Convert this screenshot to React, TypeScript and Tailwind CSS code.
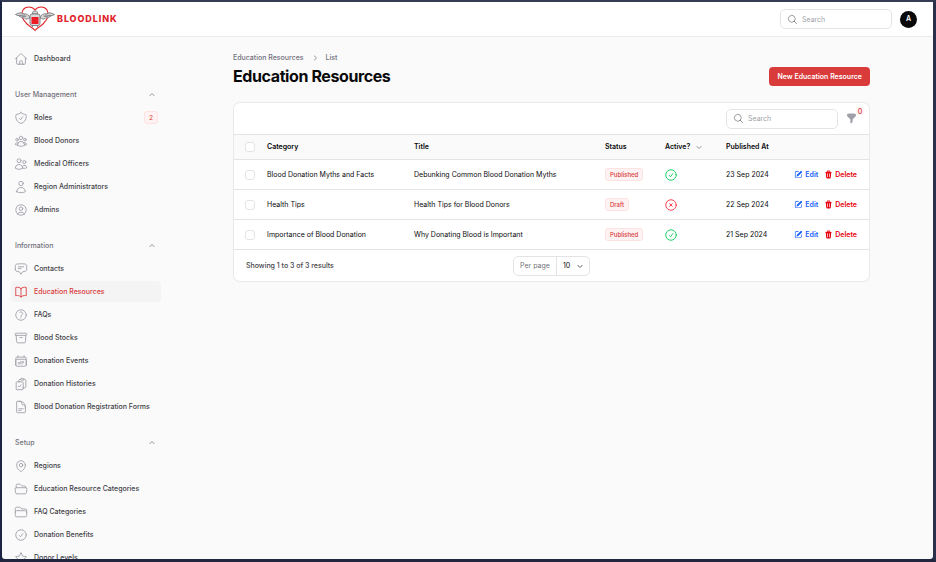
import type { ReactNode } from "react";
import type { IconType } from "react-icons";
import {
  HiOutlineHome, HiOutlineShieldCheck, HiOutlineUserGroup, HiOutlineUsers, HiOutlineUser, HiOutlineUserCircle,
  HiOutlineChatBubbleBottomCenterText, HiOutlineBookOpen, HiOutlineQuestionMarkCircle, HiOutlineArchiveBox,
  HiOutlineCalendarDays, HiOutlineClipboardDocumentCheck, HiOutlineDocumentText, HiOutlineMapPin,
  HiOutlineFolderOpen, HiOutlineFolder, HiOutlineCheckCircle, HiOutlineXCircle, HiOutlineStar,
  HiOutlineMagnifyingGlass, HiMiniChevronUp, HiMiniChevronDown, HiMiniChevronRight,
  HiMiniFunnel, HiMiniPencilSquare, HiMiniTrash,
} from "react-icons/hi2";

type Item = { label: string; icon: IconType; badge?: string; active?: boolean };

const groups: { label: string; items: Item[] }[] = [
  {
    label: "User Management",
    items: [
      { label: "Roles", icon: HiOutlineShieldCheck, badge: "2" },
      { label: "Blood Donors", icon: HiOutlineUserGroup },
      { label: "Medical Officers", icon: HiOutlineUsers },
      { label: "Region Administrators", icon: HiOutlineUser },
      { label: "Admins", icon: HiOutlineUserCircle },
    ],
  },
  {
    label: "Information",
    items: [
      { label: "Contacts", icon: HiOutlineChatBubbleBottomCenterText },
      { label: "Education Resources", icon: HiOutlineBookOpen, active: true },
      { label: "FAQs", icon: HiOutlineQuestionMarkCircle },
      { label: "Blood Stocks", icon: HiOutlineArchiveBox },
      { label: "Donation Events", icon: HiOutlineCalendarDays },
      { label: "Donation Histories", icon: HiOutlineClipboardDocumentCheck },
      { label: "Blood Donation Registration Forms", icon: HiOutlineDocumentText },
    ],
  },
  {
    label: "Setup",
    items: [
      { label: "Regions", icon: HiOutlineMapPin },
      { label: "Education Resource Categories", icon: HiOutlineFolderOpen },
      { label: "FAQ Categories", icon: HiOutlineFolder },
      { label: "Donation Benefits", icon: HiOutlineCheckCircle },
      { label: "Donor Levels", icon: HiOutlineStar },
    ],
  },
];

const rows = [
  { category: "Blood Donation Myths and Facts", title: "Debunking Common Blood Donation Myths", status: "Published", active: true, date: "23 Sep 2024" },
  { category: "Health Tips", title: "Health Tips for Blood Donors", status: "Draft", active: false, date: "22 Sep 2024" },
  { category: "Importance of Blood Donation", title: "Why Donating Blood is Important", status: "Published", active: true, date: "21 Sep 2024" },
];

function Logo() {
  return (
    <svg viewBox="0 0 40 26" className="h-[26px] w-10" fill="none" aria-hidden="true">
      <path d="M20 4C17 0 10.500 0 8 4C5 9 8 14 12 18C15 21 18 22 20 24.500C22 22 25 21 28 18C32 14 35 9 32 4C29.500 0 23 0 20 4Z" stroke="#e02a2e" strokeWidth="1.100" />
      <g stroke="#77777a" strokeWidth="0.900" fill="#d9d9da">
        <path d="M15 12C13 6.500 10 8.500 8 7.500C5 6 3 7.500 .5 8.500C2 9.500 3 9.500 4 9.500C4 11 6 11 6.500 11C7 12.500 9 12 9.500 12C11 14 13 12.500 15 12Z" />
        <path d="M25 12C27 6.500 30 8.500 32 7.500C35 6 37 7.500 39.500 8.500C38 9.500 37 9.500 36 9.500C36 11 34 11 33.500 11C33 12.500 31 12 30.500 12C29 14 27 12.500 25 12Z" />
        <path d="M4 9.500L10 9M6.500 11L11.500 10M36 9.500L30 9M33.500 11L28.500 10" />
        <path d="M17.500 6.500C17.500 4.500 22.500 4.500 22.500 6.500V8H17.500Z" />
        <rect x="15" y="8" width="10" height="11.500" rx="2" />
        <path d="M17.500 19.500V21M22.500 19.500V21" />
      </g>
      <path d="M16.500 11H23.500V18H16.500Z" fill="#ee1c24" />
    </svg>
  );
}

function SearchBox({ id }: { id: string }) {
  return (
    <label htmlFor={id} className="flex h-5 w-28 items-center gap-1 rounded-[5px] border border-zinc-200 bg-white pl-1.5">
      <HiOutlineMagnifyingGlass className="size-[11px] shrink-0 text-zinc-500" />
      <input id={id} type="text" aria-label="Search" placeholder="Search" className="h-full w-full min-w-0 bg-transparent text-[7px] outline-none placeholder:text-zinc-400" />
    </label>
  );
}

function NavLink({ item }: { item: Item }) {
  const Icon = item.icon;
  return (
    <a
      href="#"
      className={
        item.active
          ? "flex h-[21px] shrink-0 items-center gap-1.5 rounded-[4px] bg-zinc-100 px-[3px] text-[#d93b3b]"
          : "flex h-[21px] shrink-0 items-center gap-1.5 rounded-[4px] px-[3px] text-zinc-700"
      }
    >
      <Icon className={item.active ? "size-3.5 shrink-0" : "size-3.5 shrink-0 text-zinc-400"} />
      <span className="flex-1 whitespace-nowrap">{item.label}</span>
      {item.badge && <Badge>{item.badge}</Badge>}
    </a>
  );
}

function Badge({ children }: { children: ReactNode }) {
  return (
    <span className="inline-flex h-[13px] items-center rounded-[3px] border border-red-100 bg-red-50 px-1 align-middle text-[6px] font-medium text-[#d93b3b]">
      {children}
    </span>
  );
}

function Tick({ label }: { label: string }) {
  return <input type="checkbox" aria-label={label} className="block size-2.5 appearance-none rounded-[3px] border border-zinc-200 bg-white checked:bg-[#d93b3b]" />;
}

export default function App() {
  return (
    <div className="h-screen overflow-hidden border-t-2 border-r-[3px] border-b-[3px] border-l-2 border-t-[#373c55] border-r-[#2b314b] border-b-[#22263f] border-l-[#1c2444] bg-[#22263f] font-['Inter',sans-serif] text-[7px] leading-3 text-zinc-950">
      <div className="flex h-full flex-col overflow-hidden rounded-b-[3px] bg-zinc-50">
        <header className="flex h-[35px] shrink-0 items-center justify-between border-b border-zinc-200/70 bg-white pr-4 pl-[13px]">
          <a href="#" className="flex items-center gap-0.5 text-[9px] font-extrabold tracking-widest text-[#e0242b]">
            <Logo />
            BLOODLINK
          </a>
          <div className="flex items-center gap-2">
            <SearchBox id="global-search" />
            <button type="button" className="flex size-[17px] items-center justify-center rounded-full bg-zinc-950 font-semibold text-white">A</button>
          </div>
        </header>
        <div className="flex min-h-0 flex-1">
          <nav className="flex w-42 shrink-0 flex-col gap-[15px] overflow-hidden px-[9px] pt-[11px] font-medium">
            <NavLink item={{ label: "Dashboard", icon: HiOutlineHome }} />
            {groups.map((g) => (
              <section key={g.label} className="flex shrink-0 flex-col gap-0.5">
                <button type="button" className="flex h-[21px] items-center justify-between px-1 font-medium text-zinc-500">
                  {g.label}
                  <HiMiniChevronUp className="size-2.5 text-zinc-400" />
                </button>
                {g.items.map((i) => <NavLink key={i.label} item={i} />)}
              </section>
            ))}
          </nav>
          <main className="min-w-0 flex-1 pt-[15px]">
            <div className="mx-auto max-w-[637px]">
              <div className="flex items-end justify-between">
                <div>
                  <nav aria-label="Breadcrumb" className="flex items-center gap-1.5 font-medium text-zinc-500">
                    <a href="#">Education Resources</a>
                    <HiMiniChevronRight className="size-2.5 text-zinc-400" />
                    <a href="#">List</a>
                  </nav>
                  <h1 className="mt-0.5 text-base leading-5 font-bold tracking-tight">Education Resources</h1>
                </div>
                <button type="button" className="h-[19px] rounded-[4px] bg-[#d93b3b] px-2 font-semibold text-white">New Education Resource</button>
              </div>
              <div className="mt-4 overflow-hidden rounded-[7px] border border-zinc-200/80 bg-white">
                <div className="flex h-[31px] items-center justify-end gap-2 pr-3">
                  <SearchBox id="table-search" />
                  <button type="button" aria-label="Filter" className="relative text-zinc-400">
                    <HiMiniFunnel className="size-[11px]" />
                    <span className="absolute -top-1.5 left-2.5 flex size-2 items-center justify-center rounded-[2px] bg-red-50 leading-none font-medium text-[#d93b3b]">0</span>
                  </button>
                </div>
                <table className="w-full table-fixed border-collapse text-left whitespace-nowrap">
                  <thead>
                    <tr className="h-[25px] border-y border-zinc-200 bg-zinc-50">
                      <th className="w-[26px] pl-[11px]"><Tick label="Select all" /></th>
                      <th className="w-[147px] pl-[7px] font-semibold">Category</th>
                      <th className="pl-[7px] font-semibold">Title</th>
                      <th className="w-[60px] pl-[7px] font-semibold">Status</th>
                      <th className="w-[61px] pl-[7px] font-semibold">
                        <button type="button" className="flex items-center gap-1">Active?<HiMiniChevronDown className="size-2.5 text-zinc-400" /></button>
                      </th>
                      <th className="w-[61px] pl-[7px] font-semibold">Published At</th>
                      <th className="w-[89px]" aria-label="Actions" />
                    </tr>
                  </thead>
                  <tbody>
                    {rows.map((r) => (
                      <tr key={r.category} className="h-[30px] border-b border-zinc-200">
                        <td className="pl-[11px]"><Tick label={r.category} /></td>
                        <td className="pl-[7px]">{r.category}</td>
                        <td className="pl-[7px]">{r.title}</td>
                        <td className="pl-[7px]"><Badge>{r.status}</Badge></td>
                        <td className="pl-1.5">
                          {r.active
                            ? <HiOutlineCheckCircle aria-label="Active" className="size-3.5 text-green-500" />
                            : <HiOutlineXCircle aria-label="Inactive" className="size-3.5 text-red-500" />}
                        </td>
                        <td className="pl-[7px]">{r.date}</td>
                        <td className="pr-3">
                          <div className="flex justify-end gap-1.5 font-semibold">
                            <a href="#" className="flex items-center gap-0.5 text-blue-600"><HiMiniPencilSquare className="size-[9px]" />Edit</a>
                            <button type="button" className="flex items-center gap-0.5 text-red-600"><HiMiniTrash className="size-[9px]" />Delete</button>
                          </div>
                        </td>
                      </tr>
                    ))}
                  </tbody>
                </table>
                <div className="grid h-[31px] grid-cols-3 items-center px-3">
                  <span className="font-medium text-zinc-700">Showing 1 to 3 of 3 results</span>
                  <div className="flex h-5 items-center justify-self-center rounded-[5px] border border-zinc-200">
                    <label htmlFor="per-page" className="px-1.5 text-zinc-500">Per page</label>
                    <span className="relative flex h-full items-center border-l border-zinc-200">
                      <select id="per-page" defaultValue="10" className="h-full w-8 appearance-none bg-transparent pl-1.5 outline-none">
                        <option>5</option>
                        <option>10</option>
                        <option>25</option>
                      </select>
                      <HiMiniChevronDown className="pointer-events-none absolute right-1 size-2.5 text-zinc-500" />
                    </span>
                  </div>
                </div>
              </div>
            </div>
          </main>
        </div>
      </div>
    </div>
  );
}
